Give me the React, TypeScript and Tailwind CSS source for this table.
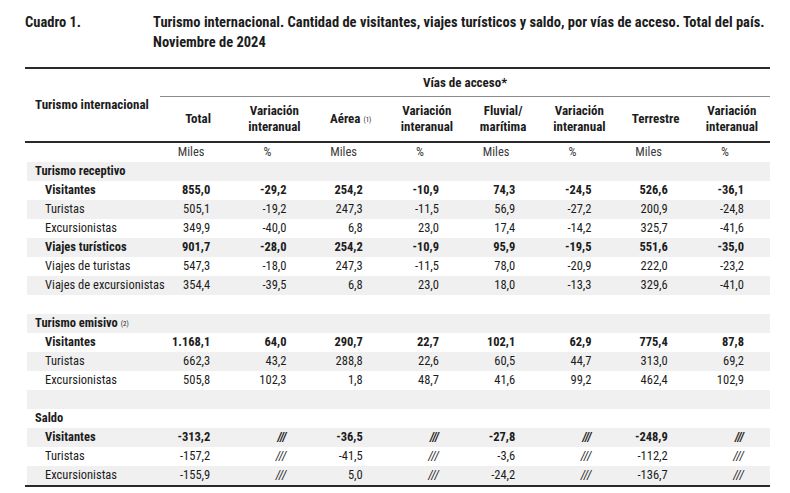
import React from "react";

type Row = { label: string; kind: "section" | "bold" | "normal" | "blank"; sup?: string; values?: string[] };

const rows: Row[] = [
  { label: "Turismo receptivo", kind: "section" },
  { label: "Visitantes", kind: "bold", values: ["855,0", "-29,2", "254,2", "-10,9", "74,3", "-24,5", "526,6", "-36,1"] },
  { label: "Turistas", kind: "normal", values: ["505,1", "-19,2", "247,3", "-11,5", "56,9", "-27,2", "200,9", "-24,8"] },
  { label: "Excursionistas", kind: "normal", values: ["349,9", "-40,0", "6,8", "23,0", "17,4", "-14,2", "325,7", "-41,6"] },
  { label: "Viajes turísticos", kind: "bold", values: ["901,7", "-28,0", "254,2", "-10,9", "95,9", "-19,5", "551,6", "-35,0"] },
  { label: "Viajes de turistas", kind: "normal", values: ["547,3", "-18,0", "247,3", "-11,5", "78,0", "-20,9", "222,0", "-23,2"] },
  { label: "Viajes de excursionistas", kind: "normal", values: ["354,4", "-39,5", "6,8", "23,0", "18,0", "-13,3", "329,6", "-41,0"] },
  { label: "", kind: "blank" },
  { label: "Turismo emisivo", kind: "section", sup: "(2)" },
  { label: "Visitantes", kind: "bold", values: ["1.168,1", "64,0", "290,7", "22,7", "102,1", "62,9", "775,4", "87,8"] },
  { label: "Turistas", kind: "normal", values: ["662,3", "43,2", "288,8", "22,6", "60,5", "44,7", "313,0", "69,2"] },
  { label: "Excursionistas", kind: "normal", values: ["505,8", "102,3", "1,8", "48,7", "41,6", "99,2", "462,4", "102,9"] },
  { label: "", kind: "blank" },
  { label: "Saldo", kind: "section" },
  { label: "Visitantes", kind: "bold", values: ["-313,2", "///", "-36,5", "///", "-27,8", "///", "-248,9", "///"] },
  { label: "Turistas", kind: "normal", values: ["-157,2", "///", "-41,5", "///", "-3,6", "///", "-112,2", "///"] },
  { label: "Excursionistas", kind: "normal", values: ["-155,9", "///", "5,0", "///", "-24,2", "///", "-136,7", "///"] },
];

const headers: { lines: string[]; sup?: string }[] = [
  { lines: ["Total"] },
  { lines: ["Variación", "interanual"] },
  { lines: ["Aérea"], sup: "(1)" },
  { lines: ["Variación", "interanual"] },
  { lines: ["Fluvial/", "marítima"] },
  { lines: ["Variación", "interanual"] },
  { lines: ["Terrestre"] },
  { lines: ["Variación", "interanual"] },
];

const units = ["Miles", "%", "Miles", "%", "Miles", "%", "Miles", "%"];

export default function App() {
  return (
    <div className="w-[790px] h-[493px] bg-white text-[#1c1c1c] overflow-hidden font-['Roboto',sans-serif] font-stretch-condensed">
      <div className="pl-[25px] pr-[20px] pt-[13px]">
        <div className="flex text-[14.5px] font-bold leading-[20px] whitespace-nowrap">
          <div className="w-[128px] shrink-0">Cuadro 1.</div>
          <div>
            <div>Turismo internacional. Cantidad de visitantes, viajes turísticos y saldo, por vías de acceso. Total del país.</div>
            <div>Noviembre de 2024</div>
          </div>
        </div>

        <div className="mt-[14px] w-[745px] h-[2px] bg-[#2a2a2a]" />

        <div className="flex w-[745px]">
          <div className="w-[135px] shrink-0" />
          <div className="flex-1">
            <div className="h-[27px] flex items-center justify-center text-[13px] font-bold">Vías de acceso*</div>
            <div className="h-[1px] bg-[#8c8c8c]" />
          </div>
        </div>

        <div className="flex w-[745px] h-[44px]">
          <div className="w-[135px] shrink-0 pl-[10px] text-[13px] font-bold leading-[16px] whitespace-nowrap">Turismo internacional</div>
          {headers.map((h, i) => (
            <div key={i} className="w-[76.25px] shrink-0 flex flex-col items-center justify-center text-[13px] font-bold leading-[16px] text-center">
              {h.lines.map((l, j) => (
                <div key={j} className="whitespace-nowrap">
                  {l}
                  {h.sup && (
                    <sup className="text-[7px] font-normal ml-[3px] relative -top-[1px]">{h.sup}</sup>
                  )}
                </div>
              ))}
            </div>
          ))}
        </div>

        <div className="w-[745px] h-[2px] bg-[#2a2a2a]" />

        <div className="flex w-[745px] h-[19px] items-center text-[12.5px] text-[#3a3a3a]">
          <div className="w-[135px] shrink-0" />
          {units.map((u, i) => (
            <div key={i} className="w-[76.25px] shrink-0 text-center pr-[14px]">{u}</div>
          ))}
        </div>

        <div className="w-[745px]">
          {rows.map((r, idx) => (
            <div
              key={idx}
              className={
                "flex h-[19px] items-center text-[12.5px] ml-[2px] " +
                (idx % 2 === 0 ? "bg-[#f0f0f0]" : "bg-white")
              }
            >
              <div
                className={
                  "w-[133px] shrink-0 whitespace-nowrap " +
                  (r.kind === "section" ? "pl-[8px] font-bold" : "pl-[18px] ") +
                  (r.kind === "bold" ? "font-bold" : "")
                }
              >
                {r.label}
                {r.sup && <sup className="text-[7px] font-normal ml-[3px] relative -top-[1px]">{r.sup}</sup>}
              </div>
              {r.values &&
                r.values.map((v, i) => (
                  <div
                    key={i}
                    className={
                      "w-[76.25px] shrink-0 text-right pr-[26px] whitespace-nowrap " +
                      (r.kind === "bold" ? "font-bold " : "") +
                      (v === "///" ? "italic" : "")
                    }
                  >
                    {v}
                  </div>
                ))}
            </div>
          ))}
        </div>

        <div className="w-[745px] h-[2px] bg-[#2a2a2a]" />
      </div>
    </div>
  );
}
